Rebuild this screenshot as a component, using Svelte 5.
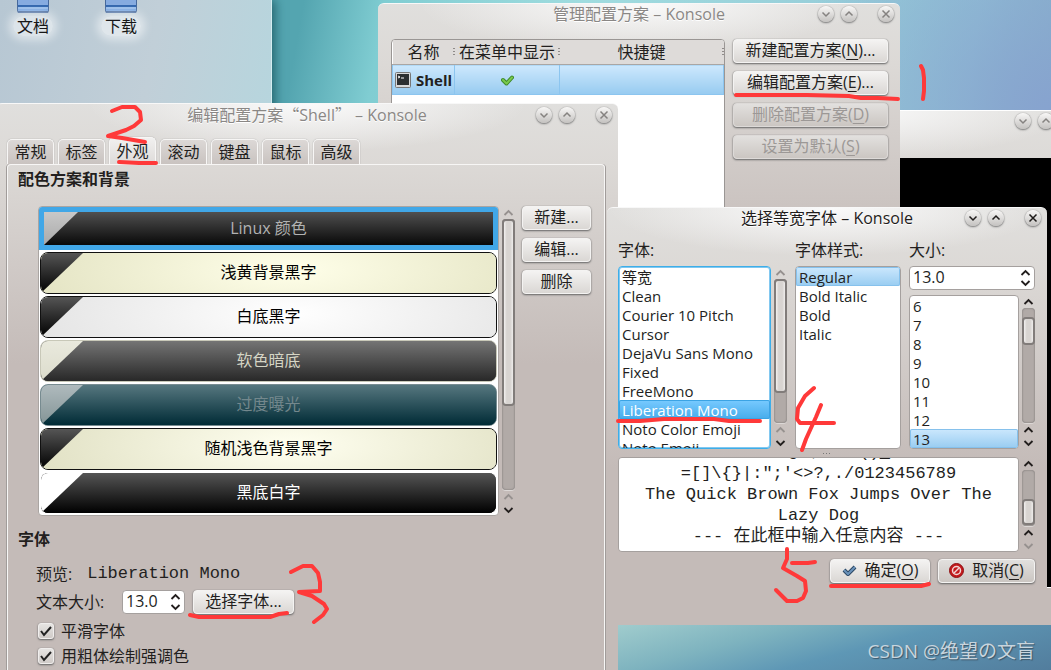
<script>
	const tabs = ['常规', '标签', '外观', '滚动', '键盘', '鼠标', '高级'];
	let activeTab = $state('外观');

	const schemes = [
		{ name: 'Linux 颜色', kind: 'linux' },
		{ name: '浅黄背景黑字', kind: 'yellow' },
		{ name: '白底黑字', kind: 'white' },
		{ name: '软色暗底', kind: 'soft' },
		{ name: '过度曝光', kind: 'solar' },
		{ name: '随机浅色背景黑字', kind: 'random' },
		{ name: '黑底白字', kind: 'black' }
	];
	let scheme = $state('linux');

	const fonts = ['等宽', 'Clean', 'Courier 10 Pitch', 'Cursor', 'DejaVu Sans Mono', 'Fixed', 'FreeMono', 'Liberation Mono', 'Noto Color Emoji', 'Noto Emoji'];
	const styles = ['Regular', 'Bold Italic', 'Bold', 'Italic'];
	const sizes = ['6', '7', '8', '9', '10', '11', '12', '13'];
	let font = $state('Liberation Mono');
	let fontStyle = $state('Regular');
	let size = $state('13');

	let sample = $state('89~`!@#$%^&*()_-\n=[]\\{}|:";\'<>?,./0123456789\nThe Quick Brown Fox Jumps Over The Lazy Dog\n--- 在此框中输入任意内容 ---');

	function scrollToEnd(node) {
		node.scrollTop = node.scrollHeight;
	}
</script>

<svelte:head>
	<title>Konsole</title>
</svelte:head>

{#snippet chevron(dir)}
	<svg width="11" height="8" viewBox="0 0 11 8" aria-hidden="true">
		<path d={dir === 'up' ? 'M1.5 6 5.5 2l4 4' : 'M1.5 2l4 4 4-4'} fill="none" stroke="currentColor" stroke-width="1.8" />
	</svg>
{/snippet}

{#snippet winButtons()}
	<div class="win-buttons">
		<button aria-label="最小化"><svg viewBox="0 0 16 16"><path d="M4.500 6.500l3.500 3.500 3.500-3.500" /></svg></button>
		<button aria-label="最大化"><svg viewBox="0 0 16 16"><path d="M4.500 9.500l3.500-3.500 3.500 3.500" /></svg></button>
		<button aria-label="关闭" class="close"><svg viewBox="0 0 16 16"><path d="M4.500 4.500l7 7M11.500 4.500l-7 7" /></svg></button>
	</div>
{/snippet}

{#snippet titlebar(title)}
	<header class="titlebar">
		<!-- curly quotes take the full-width glyphs of the CJK font -->
		<h1>{#each title.split(/([“”])/) as part}<span class:wide={part === '“' || part === '”'}>{part}</span>{/each}</h1>
		{@render winButtons()}
	</header>
{/snippet}

{#snippet scrollbar(start, length, canUp, canDown)}
	<div class="scrollbar">
		<button class:dim={!canUp} aria-label="向上">{@render chevron('up')}</button>
		<div class="track">
			<div class="thumb" style="top: {start}%; height: {length}%"></div>
		</div>
		<button class:dim={!canUp} aria-label="向上">{@render chevron('up')}</button>
		<button class:dim={!canDown} aria-label="向下">{@render chevron('down')}</button>
	</div>
{/snippet}

{#snippet spin(id)}
	<div class="spin">
		<input {id} type="text" inputmode="decimal" value="13.0" />
		<div class="steps">
			<button aria-label="增大">{@render chevron('up')}</button>
			<button aria-label="减小">{@render chevron('down')}</button>
		</div>
	</div>
{/snippet}

{#snippet check(label)}
	<label class="check">
		<span class="tick">
			<input type="checkbox" checked />
			<svg width="16" height="16" viewBox="0 0 16 16"><path d="M3 8l3 4 7-8" fill="none" stroke="#222" stroke-width="2" /></svg>
		</span>
		{label}
	</label>
{/snippet}

{#snippet folder(name)}
	<a class="folder" href="#{name}">
		<svg width="32" height="13" viewBox="0 0 32 13">
			<path d="M0 0h32v11l-1 2H1l-1-2z" fill="#45689c" />
			<path d="M1 0h30v5H1z" fill="#86abe0" />
			<path d="M1 5h30v2H1z" fill="#2f64ad" />
			<path d="M1 7h30v4H1z" fill="#78a5df" />
			<path d="M1 8h30" stroke="#b4d0f2" />
		</svg>
		<span>{name}</span>
	</a>
{/snippet}

<main class="desktop">
	<nav class="folder-view">
		{@render folder('文档')}
		{@render folder('下载')}
	</nav>

	<section class="window terminal">
		<header class="titlebar">
			{@render winButtons()}
		</header>
		<div class="screen"></div>
		<footer></footer>
	</section>

	<section class="window manage">
		{@render titlebar('管理配置方案 – Konsole')}
		<div class="manage-body">
			<div class="table-frame">
				<table>
					<thead>
						<tr><th class="name">名称</th><th class="shown">在菜单中显示</th><th>快捷键</th></tr>
					</thead>
					<tbody>
						<tr>
							<td>
								<div class="profile">
									<svg width="16" height="16" viewBox="0 0 16 16">
										<rect x="0.5" y="0.5" width="15" height="15" rx="1" fill="#d8d8d8" stroke="#777" />
										<rect x="2" y="2" width="12" height="11" fill="#2c2f30" />
										<path d="M3 4l2 1-2 1M6 6h3" fill="none" stroke="#fff" />
									</svg>
									Shell
								</div>
							</td>
							<td class="mark">
								<svg width="13" height="11" viewBox="0 0 13 11" aria-label="是">
									<path d="M2 5l3.500 3.500L11 2.500" fill="none" stroke="#3e8a2a" stroke-width="4" stroke-linejoin="round" stroke-linecap="round" />
									<path d="M2 5l3.500 3.500L11 2.500" fill="none" stroke="#79c94c" stroke-width="2" stroke-linejoin="round" stroke-linecap="round" />
								</svg>
							</td>
							<td></td>
						</tr>
					</tbody>
				</table>
			</div>
			<div class="button-column">
				<button class="btn">新建配置方案(<u>N</u>)...</button>
				<button class="btn">编辑配置方案(<u>E</u>)...</button>
				<button class="btn" disabled>删除配置方案(<u>D</u>)</button>
				<button class="btn" disabled>设置为默认(<u>S</u>)</button>
			</div>
		</div>
	</section>

	<section class="window edit">
		{@render titlebar('编辑配置方案“Shell” – Konsole')}
		<div class="tabs" role="tablist">
			{#each tabs as tab}
				<button role="tab" aria-selected={tab === activeTab} class:active={tab === activeTab} onclick={() => (activeTab = tab)}>{tab}</button>
			{/each}
		</div>
		<div class="panel">
			<h2>配色方案和背景</h2>
			<div class="scheme-area">
				<div class="schemes" role="listbox" aria-label="配色方案">
					{#each schemes as s}
						<button role="option" aria-selected={s.kind === scheme} class="scheme {s.kind}" class:selected={s.kind === scheme} onclick={() => (scheme = s.kind)}>
							<span class="swatch">{s.name}</span>
						</button>
					{/each}
				</div>
				{@render scrollbar(0, 69, false, true)}
				<div class="button-column small">
					<button class="btn">新建...</button>
					<button class="btn">编辑...</button>
					<button class="btn">删除</button>
				</div>
			</div>
			<h2 class="font-heading">字体</h2>
			<div class="font-area">
				<div class="row preview-row">预览: <span class="mono">Liberation Mono</span></div>
				<div class="row">
					<label for="text-size">文本大小:</label>
					{@render spin('text-size')}
					<button class="btn choose">选择字体...</button>
				</div>
				{@render check('平滑字体')}
				{@render check('用粗体绘制强调色')}
			</div>
		</div>
	</section>

	<section class="window chooser">
		{@render titlebar('选择等宽字体 – Konsole')}
		<div class="chooser-body">
			<div class="pickers">
				<div class="picker family">
					<span class="caption">字体:</span>
					<div class="with-bar">
						<div class="list focused" role="listbox" aria-label="字体">
							{#each fonts as f}
								<button role="option" aria-selected={f === font} class:selected={f === font} onclick={() => (font = f)}>{f}</button>
							{/each}
						</div>
						{@render scrollbar(0, 79, false, true)}
					</div>
				</div>
				<div class="picker style">
					<span class="caption">字体样式:</span>
					<div class="list" role="listbox" aria-label="字体样式">
						{#each styles as s}
							<button role="option" aria-selected={s === fontStyle} class:selected={s === fontStyle} onclick={() => (fontStyle = s)}>{s}</button>
						{/each}
					</div>
				</div>
				<div class="picker size">
					<label class="caption" for="font-size">大小:</label>
					{@render spin('font-size')}
					<div class="with-bar">
						<div class="list" role="listbox" aria-label="大小">
							{#each sizes as s}
								<button role="option" aria-selected={s === size} class:selected={s === size} onclick={() => (size = s)}>{s}</button>
							{/each}
						</div>
						{@render scrollbar(8, 24, true, true)}
					</div>
				</div>
			</div>
			<div class="splitter"><i></i><i></i><i></i></div>
			<div class="with-bar sample">
				<textarea bind:value={sample} use:scrollToEnd aria-label="预览" spellcheck="false"></textarea>
				{@render scrollbar(51, 47, true, false)}
			</div>
			<div class="actions">
				<button class="btn ok">
					<svg width="15" height="13" viewBox="0 0 15 13">
						<path d="M2 6l4 4 7-7" fill="none" stroke="#2b4763" stroke-width="4" stroke-linejoin="round" />
						<path d="M2 6l4 4 7-7" fill="none" stroke="#6b93bb" stroke-width="2" />
					</svg>
					<span>确定(<u>O</u>)</span>
				</button>
				<button class="btn">
					<svg width="15" height="15" viewBox="0 0 15 15">
						<circle cx="7.500" cy="7.500" r="7" fill="#c3191c" stroke="#8d1013" />
						<circle cx="7.500" cy="7.500" r="4" fill="none" stroke="#f3d5d5" stroke-width="1.500" />
						<path d="M5 10l5-5" stroke="#f3d5d5" stroke-width="1.500" />
					</svg>
					<span>取消(<u>C</u>)</span>
				</button>
			</div>
		</div>
	</section>

	<p class="watermark">CSDN @绝望の文盲</p>

	<!-- hand-drawn step marks -->
	<svg class="marks" width="1051" height="670" viewBox="0 0 1051 670" aria-hidden="true">
		<path d="M736 95h71l42 1 12 2h17l20 1M921 66l2 4 1 8v13l-1 8" />
		<path d="M112 111l10-4h13l5 5 1 8-7 6-8 4-18 6 14 2 23 4M119 162l20 1h17" />
		<path d="M291 572l12-6h9l6 7 2 9v9l-21 1 13 4 12 8 3 5-4 6-9 7M190 615l9 2h71l9-3 8-1" />
		<path d="M814 388l-9 8-7 12-1 11 3 4h20l14 0M821 405l-5 12-10 22-4 11M618 421l22 0 24-2h50l15 2h31" />
		<path d="M787 549v10l-4 9 14 8 8 5 1 10-3 7-6 3h-10l-11-11M792 563h16l7-1M831 586h90l8-2" />
	</svg>
</main>

<style>
	:global(body) {
		margin: 0;
	}

	.desktop {
		position: relative;
		min-height: 100vh;
		overflow: hidden;
		font-family: "Open Sans", "Noto Sans CJK SC", sans-serif;
		font-size: 16px;
		line-height: 20px;
		color: #231f1e;
		background:
			linear-gradient(165deg, #a0cccd 0%, #7eb3bf 30%, #5e97b5 55%, #527d9d 100%) no-repeat right bottom / 434px 45px,
			radial-gradient(circle 260px at 100% 110px, #87a3cf, rgba(135, 163, 207, 0)),
			linear-gradient(100deg, #54a5b0 26%, #80cdd2 33%, #a0dcdf 50%, #92c6d6 84%, #7da3bb 100%);
	}

	button,
	input,
	textarea {
		font: inherit;
		color: inherit;
		box-sizing: border-box;
	}

	button {
		padding: 0;
		border: none;
		background: none;
	}

	h1,
	h2,
	p {
		margin: 0;
	}

	.folder-view {
		position: absolute;
		top: 0;
		left: 0;
		width: 272px;
		height: 300px;
		box-sizing: border-box;
		padding-left: 5px;
		display: flex;
		gap: 32px;
		border-right: 1px solid #d5edf0;
		background: linear-gradient(100deg, #b7c7d3, #c1cfd8 50%, #b4d7df);
		box-shadow: 3px 0 10px #24646e;
	}

	.folder {
		display: flex;
		flex-direction: column;
		align-items: center;
		gap: 3px;
		width: 56px;
		color: #171717;
		text-decoration: none;
	}

	.folder span {
		padding: 0 4px;
		border-radius: 10px;
		background: rgba(255, 255, 255, 0.5);
		box-shadow: 0 0 8px 4px rgba(255, 255, 255, 0.5);
	}

	.window {
		position: absolute;
		display: flex;
		flex-direction: column;
		box-sizing: border-box;
		border-top: 1px solid #f8f8f8;
		border-radius: 6px 6px 0 0;
		background:
			radial-gradient(ellipse 220px 48px at 50% 0, #fafafa, rgba(250, 250, 250, 0)),
			linear-gradient(#e0dfdd, #dcd9d6 60px, #c4bbb8 260px);
	}

	.titlebar {
		display: grid;
		grid-template-columns: 1fr auto 1fr;
		align-items: center;
		height: 20px;
		padding: 0 6px;
	}

	.titlebar h1 {
		grid-column: 2;
		font-size: 16px;
		font-weight: 400;
		color: #8a8785;
		white-space: pre;
		text-shadow: 0 1px #fff;
	}

	.wide {
		font-family: "Noto Sans CJK SC", sans-serif;
	}

	.win-buttons {
		grid-column: 3;
		justify-self: end;
		display: flex;
		gap: 7px;
		color: #858280;
	}

	.win-buttons button {
		width: 16px;
		height: 16px;
		border-radius: 50%;
		background: linear-gradient(#f8f7f6, #c4c2c0);
		box-shadow: 0 1px 2px #777, 0 0 1px #777;
	}

	.win-buttons .close {
		margin-left: 14px;
	}

	.win-buttons svg {
		display: block;
		fill: none;
		stroke: currentColor;
		stroke-width: 1.5;
	}

	.btn {
		height: 24px;
		padding: 0 0 2px;
		border: 1px solid #f4f3f2;
		border-radius: 4px;
		background: linear-gradient(#f4f3f2, #dad7d4);
		box-shadow: 0 1px 2px #666, 0 0 1px #888;
		line-height: 20px;
		white-space: nowrap;
	}

	.btn:disabled {
		border-color: #dddad8;
		background: linear-gradient(#e2e0de, #cbc6c2);
		color: #9c9896;
	}

	u {
		text-underline-offset: 3px;
		text-decoration-thickness: 1px;
	}

	.button-column {
		display: flex;
		flex-direction: column;
		gap: 8px;
		width: 155px;
	}

	.button-column.small {
		width: 69px;
		margin-left: 7px;
	}

	/* terminal behind the dialogs */
	.terminal {
		top: 110px;
		right: -46px;
		width: 497px;
		height: 515px;
		border-color: #fff;
	}

	.terminal .titlebar {
		height: 47px;
		align-items: start;
		padding-top: 2px;
		box-sizing: border-box;
	}

	.screen {
		flex: 1;
		background: #000;
	}

	.terminal footer {
		height: 37px;
		border-top: 1px solid #fff;
		background: #c4bbb8;
	}

	.manage {
		top: 3px;
		left: 378px;
		width: 522px;
		height: 560px;
	}

	.manage-body {
		flex: 1;
		display: flex;
		gap: 8px;
		padding: 15px 12px 12px 13px;
	}

	.table-frame {
		flex: 1;
		border: 1px solid #9a9694;
		border-radius: 4px 4px 0 0;
		background: #fff;
		overflow: hidden;
	}

	table {
		width: 100%;
		table-layout: fixed;
		border-collapse: collapse;
	}

	th {
		height: 24px;
		padding: 0;
		font-weight: 400;
		white-space: nowrap;
		background: repeating-linear-gradient(#8f8b89 0 1px, #dedbd9 1px 3px) no-repeat right center / 2px 9px #dedbd9;
		border-bottom: 1px solid #aaa6a4;
	}

	th.name {
		width: 62px;
	}

	th.shown {
		width: 105px;
	}

	td {
		height: 29px;
		padding: 0;
		border: 1px solid #8cc5ef;
		background: linear-gradient(#cde8fd, #97cbf0);
	}

	.profile {
		display: flex;
		align-items: center;
		gap: 5px;
		padding-left: 2px;
		font-size: 15px;
		font-weight: 700;
	}

	.mark {
		text-align: center;
	}

	.edit {
		top: 103px;
		left: -4px;
		width: 622px;
		height: 600px;
	}

	.tabs {
		display: flex;
		align-items: flex-end;
		gap: 4px;
		padding: 13px 11px 0;
	}

	.tabs button {
		width: 47px;
		height: 25px;
		border: 1px solid #f7f6f5;
		border-bottom: none;
		border-radius: 5px 5px 0 0;
		background: linear-gradient(#dcd8d6, #c9c3c0);
		box-shadow: 0 0 1px #777;
	}

	.tabs button.active {
		height: 27px;
		background: linear-gradient(#f1f0ef, #dedbd9);
	}

	.panel {
		flex: 1;
		margin: 0 13px 0 11px;
		padding: 4px 13px 0 10px;
		border: 1px solid #f7f6f5;
		border-bottom: none;
		border-radius: 4px 4px 0 0;
		box-shadow: 1px 0 #a19c9a, -1px 0 #a19c9a;
	}

	h2 {
		font-size: 16px;
		line-height: 20px;
	}

	.scheme-area {
		display: flex;
		height: 310px;
		margin: 17px 0 0 20px;
	}

	.schemes {
		flex: 1;
		display: flex;
		flex-direction: column;
		gap: 2px;
		box-sizing: border-box;
		padding: 1px;
		border: 1px solid #aaa5a2;
		border-radius: 4px;
		background: #fff;
		overflow: hidden;
	}

	.scheme {
		flex: none;
		height: 42px;
		border: 1px solid var(--edge, var(--corner));
		border-radius: 8px;
		overflow: hidden;
		background: var(--face);
		color: var(--ink);
	}

	.scheme.selected {
		height: 43px;
		margin: -1px -1px 0;
		padding: 5px;
		border-color: #41a7e7;
		border-radius: 0;
		background: #41a7e7;
	}

	.swatch {
		position: relative;
		display: grid;
		place-items: center;
		box-sizing: border-box;
		height: 100%;
		padding-bottom: 2px;
		background: var(--face);
	}

	.swatch::before {
		content: "";
		position: absolute;
		top: 0;
		left: 0;
		width: 42px;
		height: 100%;
		background: var(--fold);
		clip-path: polygon(0 0, 100% 0, 0 100%);
	}

	.selected .swatch::before {
		width: 34px;
	}

	.linux {
		--face: linear-gradient(#505050, #080808);
		--fold: linear-gradient(#c8c8c8, #aaa);
		--ink: #b2b2b2;
	}

	.yellow {
		--face: radial-gradient(ellipse 320px 100px at 55% 40%, #ffffe9, #dedebc);
		--fold: linear-gradient(#555, #000);
		--edge: #111;
		--ink: #000;
	}

	.white {
		--face: radial-gradient(ellipse 320px 100px at 55% 40%, #fff, #dedede);
		--fold: linear-gradient(#555, #000);
		--edge: #111;
		--ink: #000;
	}

	.soft {
		--face: linear-gradient(#747474, #282828);
		--fold: linear-gradient(#e9e9dd, #dcdccc);
		--edge: #c8c8b8;
		--ink: #d5d5c5;
	}

	.solar {
		--face: linear-gradient(#56777f, #002b36);
		--fold: linear-gradient(#afbabd, #839496);
		--edge: #778b90;
		--ink: #74888d;
	}

	.random {
		--face: radial-gradient(ellipse 320px 100px at 55% 40%, #fffff0, #dadaba);
		--fold: linear-gradient(#555, #000);
		--edge: #111;
		--ink: #000;
	}

	.black {
		--face: linear-gradient(#555, #000);
		--fold: #fff;
		--edge: #fff;
		--ink: #fff;
	}

	.scrollbar {
		display: flex;
		flex-direction: column;
		width: 13px;
		margin-left: 3px;
	}

	.scrollbar button {
		display: grid;
		place-items: center;
		height: 13px;
	}

	.scrollbar .dim {
		color: #96918f;
	}

	.track {
		position: relative;
		flex: 1;
		border-radius: 4px;
		background: #b1aaa7;
		box-shadow: inset 0 0 2px #6a6664, 0 1px #dcd8d6;
	}

	.thumb {
		position: absolute;
		left: 0;
		right: 0;
		box-sizing: border-box;
		border: 2px solid #817c7a;
		border-radius: 4px;
		background: linear-gradient(to right, #f2f0ef, #d8d4d1 30%, #d8d4d1 70%, #eeeceb);
	}

	.font-heading {
		margin-top: 13px;
	}

	.font-area {
		display: flex;
		flex-direction: column;
		margin: 11px 0 0 18px;
	}

	.row {
		display: flex;
		align-items: center;
		height: 28px;
	}

	.row label {
		width: 86px;
	}

	.preview-row {
		gap: 15px;
	}

	.mono {
		font-family: "Liberation Mono", monospace;
		font-size: 17px;
	}

	.choose {
		width: 101px;
		margin-left: 8px;
	}

	.spin {
		display: flex;
		box-sizing: border-box;
		width: 63px;
		height: 24px;
		padding-right: 3px;
		border: 1px solid #a5a09e;
		border-radius: 4px;
		background: #fff;
	}

	.spin input {
		flex: 1;
		min-width: 0;
		padding: 0 0 2px 3px;
		border: none;
		background: none;
		outline: none;
	}

	.steps {
		display: flex;
		flex-direction: column;
		justify-content: center;
		gap: 2px;
	}

	.steps button {
		height: 8px;
	}

	.steps svg {
		display: block;
	}

	.check {
		display: flex;
		align-items: center;
		gap: 7px;
		height: 25px;
		padding-left: 2px;
	}

	.row + .check {
		margin-top: 2px;
	}

	.tick {
		display: grid;
		place-items: center;
	}

	.tick > * {
		grid-area: 1 / 1;
	}

	.tick input {
		appearance: none;
		width: 16px;
		height: 16px;
		margin: 0;
		border: 1px solid #f0eeed;
		border-radius: 3px;
		background: linear-gradient(#e6e4e2, #d0cbc8);
		box-shadow: 0 1px 2px #666, 0 0 1px #888;
	}

	.tick svg {
		pointer-events: none;
		z-index: 1;
	}

	.tick input:not(:checked) + svg {
		visibility: hidden;
	}

	.chooser {
		top: 207px;
		left: 607px;
		width: 440px;
		height: 390px;
	}

	.chooser .titlebar h1,
	.chooser .win-buttons {
		color: #1f1c1b;
	}

	.chooser-body {
		padding: 11px 12px 0 11px;
	}

	.pickers {
		display: flex;
		gap: 8px;
		height: 210px;
	}

	.picker {
		display: flex;
		flex-direction: column;
	}

	.family {
		flex: 1;
	}

	.style {
		width: 106px;
	}

	.size {
		width: 126px;
	}

	.caption {
		height: 27px;
		line-height: 22px;
	}

	.with-bar {
		flex: 1;
		display: flex;
		min-height: 0;
	}

	.size .with-bar {
		margin-top: 5px;
	}

	.size .spin {
		width: auto;
	}

	.list {
		flex: 1;
		box-sizing: border-box;
		border: 1px solid #a5a09e;
		border-radius: 4px;
		background: #fff;
		overflow: hidden;
	}

	.list.focused {
		border-color: #3daee9;
		box-shadow: inset 0 0 0 1px #82c8f0;
	}

	.list button {
		display: block;
		width: 100%;
		height: 19px;
		padding-left: 3px;
		border-radius: 2px;
		font-size: 15px;
		line-height: 18px;
		text-align: left;
		white-space: nowrap;
	}

	.list .selected {
		background: linear-gradient(#cce8fd, #98ccf1);
		box-shadow: inset 0 0 0 1px #86c1ec;
	}

	.list.focused .selected {
		background: linear-gradient(#78caff, #46aceb);
		box-shadow: inset 0 0 0 1px #3ba3e4;
		color: #fff;
	}

	.splitter {
		display: flex;
		justify-content: center;
		align-items: center;
		gap: 2px;
		height: 8px;
	}

	.splitter i {
		width: 1px;
		height: 1px;
		background: #777;
	}

	.sample {
		height: 95px;
	}

	textarea {
		flex: 1;
		min-width: 0;
		padding: 0 6px 4px;
		border: 1px solid #a5a09e;
		border-radius: 4px;
		background: #fff;
		outline: none;
		resize: none;
		scrollbar-width: none;
		font-family: "Liberation Mono", "Noto Sans CJK SC", monospace;
		font-size: 17px;
		line-height: 21px;
		text-align: center;
	}

	.actions {
		display: flex;
		justify-content: flex-end;
		gap: 8px;
		padding-top: 7px;
	}

	.actions .btn {
		display: flex;
		justify-content: center;
		align-items: center;
		gap: 8px;
		width: 97px;
	}

	.actions .btn:last-child {
		background: linear-gradient(#e2e0de, #cbc6c2);
	}

	.actions .ok {
		width: 100px;
	}

	.watermark {
		position: absolute;
		right: 16px;
		bottom: 7px;
		font-size: 19px;
		line-height: 24px;
		color: #c8d5de;
		text-shadow: 1px 1px 1px #3d5668;
	}

	.marks {
		position: absolute;
		top: 0;
		left: 0;
		fill: none;
		stroke: #ff3939;
		stroke-width: 4;
		stroke-linecap: round;
		stroke-linejoin: round;
		pointer-events: none;
	}
</style>
